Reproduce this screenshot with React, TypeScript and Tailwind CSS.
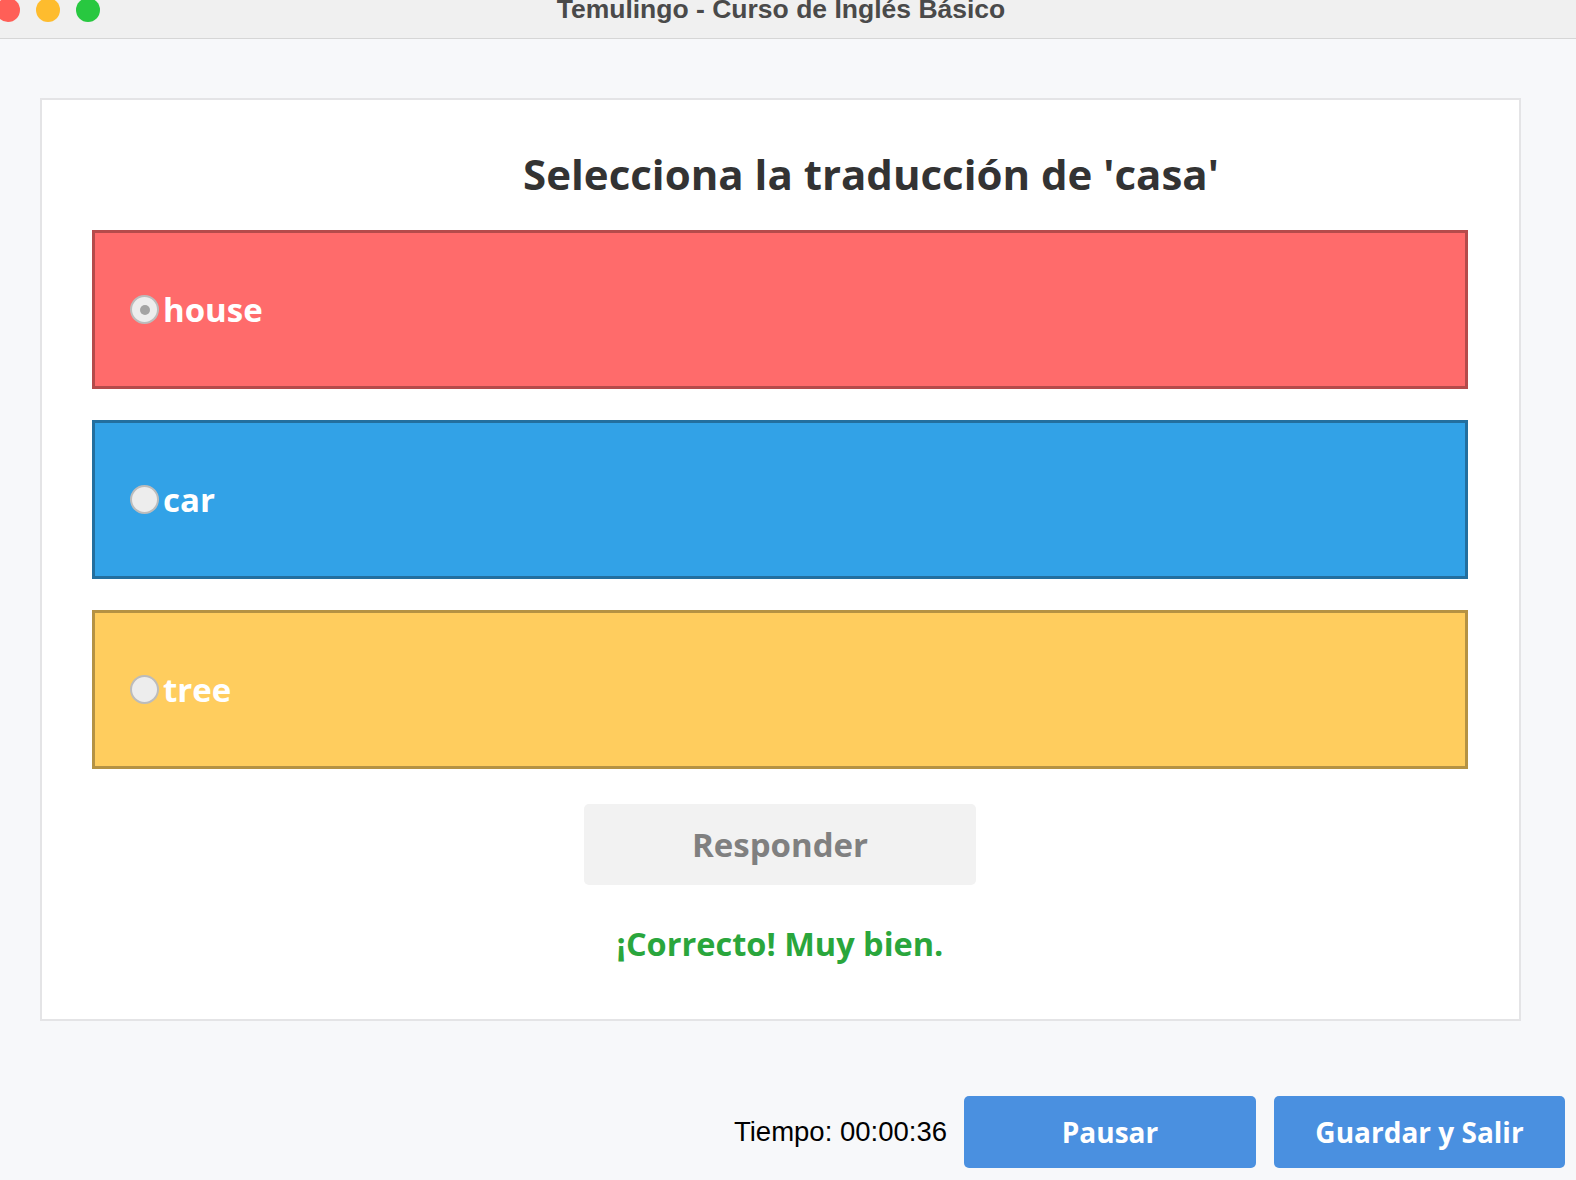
import React from "react";

const sans = { fontFamily: '"Open Sans", "Noto Sans", sans-serif' };

function Radio({ checked }: { checked?: boolean }) {
  return (
    <span className="flex h-[29px] w-[29px] shrink-0 items-center justify-center rounded-full border-2 border-[#bcbcbc] bg-[#ededed]">
      {checked && <span className="h-[10px] w-[10px] rounded-full bg-[#a3a3a3]" />}
    </span>
  );
}

function Option({
  label,
  bg,
  border,
  checked,
}: {
  label: string;
  bg: string;
  border: string;
  checked?: boolean;
}) {
  return (
    <div className={`flex h-[159px] items-center border-[3px] pl-[35px] ${bg} ${border}`}>
      <Radio checked={checked} />
      <span className="ml-[4px] text-[33px] font-bold leading-none text-white" style={sans}>
        {label}
      </span>
    </div>
  );
}

export default function App() {
  return (
    <div className="flex h-[1180px] w-[1576px] flex-col overflow-hidden bg-[#f7f8fa]">
      {/* Title bar */}
      <div className="relative flex h-[39px] shrink-0 items-start border-b border-[#d6d6d6] bg-[#f0f0f0]">
        <div className="-mt-[2px] ml-[-4px] flex gap-[16px]">
          <span className="h-[24px] w-[24px] rounded-full bg-[#ff5f57]" />
          <span className="h-[24px] w-[24px] rounded-full bg-[#febc2e]" />
          <span className="h-[24px] w-[24px] rounded-full bg-[#28c840]" />
        </div>
        <div
          className="absolute left-0 right-0 top-[-6px] pr-[14px] text-center text-[26.5px] font-bold leading-[30px] text-[#4a4a4a]"
          style={{ fontFamily: '"Liberation Sans", Arial, sans-serif' }}
        >
          Temulingo - Curso de Inglés Básico
        </div>
      </div>

      {/* Card */}
      <div className="ml-[40px] mt-[59px] flex h-[923px] w-[1481px] flex-col border-2 border-[#e4e4e6] bg-white pl-[50px] pr-[51px] pt-[49px]">
        <h1
          className="pl-[182px] text-center text-[42px] font-bold leading-[50px] text-[#333333]"
          style={sans}
        >
          Selecciona la traducción de &apos;casa&apos;
        </h1>
        <div className="mt-[31px] flex flex-col gap-[31px]">
          <Option label="house" bg="bg-[#ff6b6b]" border="border-[#b54b4b]" checked />
          <Option label="car" bg="bg-[#32a2e7]" border="border-[#236f9f]" />
          <Option label="tree" bg="bg-[#ffcd5e]" border="border-[#b59243]" />
        </div>
        <div className="mt-[35px] flex justify-center">
          <button
            className="flex h-[81px] w-[392px] items-center justify-center rounded-[5px] bg-[#f2f2f2] text-[33px] font-bold text-[#808080]"
            style={sans}
          >
            Responder
          </button>
        </div>
        <div
          className="mt-[39px] text-center text-[32.5px] font-bold leading-[40px] text-[#2aa63c]"
          style={sans}
        >
          ¡Correcto! Muy bien.
        </div>
      </div>

      {/* Bottom bar */}
      <div className="mt-[75px] flex items-center justify-end pr-[11px]">
        <span
          className="mr-[17px] text-[27.5px] leading-none text-black"
          style={{ fontFamily: '"Liberation Sans", Arial, sans-serif' }}
        >
          Tiempo: 00:00:36
        </span>
        <button
          className="flex h-[72px] w-[292px] items-center justify-center rounded-[5px] bg-[#4a90e0] text-[28px] font-bold text-white"
          style={sans}
        >
          Pausar
        </button>
        <button
          className="ml-[18px] flex h-[72px] w-[291px] items-center justify-center rounded-[5px] bg-[#4a90e0] text-[28px] font-bold text-white"
          style={sans}
        >
          Guardar y Salir
        </button>
      </div>
    </div>
  );
}
